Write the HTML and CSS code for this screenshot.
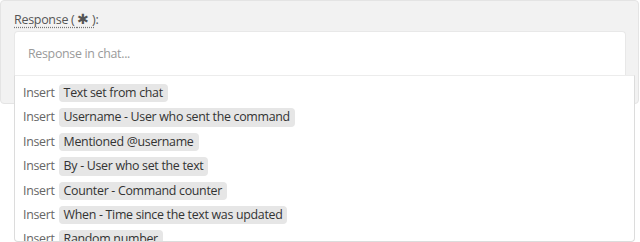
FILE: index.html
```html
<!DOCTYPE html>
<html>
<head>
<meta charset="utf-8">
<link rel="stylesheet" href="styles.css">
</head>
<body>
<div class="panel">
  <label class="label"><span class="abbr">Response ( <span class="star">✱</span> )</span>:</label>
  <div class="field">
    <div class="input">Response in chat...</div>
    <ul class="menu">
      <li class="item"><span class="verb">Insert</span><span class="pill">Text set from chat</span></li>
      <li class="item"><span class="verb">Insert</span><span class="pill">Username - User who sent the command</span></li>
      <li class="item"><span class="verb">Insert</span><span class="pill">Mentioned @username</span></li>
      <li class="item"><span class="verb">Insert</span><span class="pill">By - User who set the text</span></li>
      <li class="item"><span class="verb">Insert</span><span class="pill">Counter - Command counter</span></li>
      <li class="item"><span class="verb">Insert</span><span class="pill">When - Time since the text was updated</span></li>
      <li class="item"><span class="verb">Insert</span><span class="pill">Random number</span></li>
    </ul>
  </div>
</div>
</body>
</html>
```
FILE: styles.css
```css
html, body {
  margin: 0;
  padding: 0;
  background: #ffffff;
  font-family: "Open Sans", "Noto Sans", sans-serif;
  font-size: 12px;
  letter-spacing: -0.3px;
}

body {
  min-height: 242px;
}

.panel {
  width: 612px;
  height: 73px;
  padding: 9px 12px 20px 13px;
  background: #f2f2f2;
  border: 1px solid #e4e4e4;
  border-radius: 4px;
}

.label {
  display: inline-block;
  color: #555555;
  font-size: 12.5px;
  line-height: 18px;
  height: 21px;
}

.abbr {
  text-decoration: underline dotted #777;
  text-underline-offset: 3px;
}

.star {
  font-size: 14px;
}

.field {
  position: relative;
}

.input {
  height: 44px;
  line-height: 44px;
  padding-left: 13px;
  background: #ffffff;
  border: 1px solid #e8e8e8;
  border-bottom: none;
  border-radius: 4px 4px 0 0;
  color: #9a9a9a;
  font-size: 12.4px;
}

.menu {
  position: absolute;
  left: 0;
  top: 44px;
  width: 611px;
  height: 160px;
  margin: 0;
  padding: 5px 0 0 8px;
  list-style: none;
  background: #ffffff;
  border: 1px solid #dcdcdc;
  border-top-color: #ececec;
  border-radius: 0 0 4px 4px;
  overflow: hidden;
  box-sizing: content-box;
  z-index: 2;
}

.item {
  display: flex;
  align-items: center;
  gap: 4px;
  padding: 3px 0;
  line-height: 18.4px;
  font-size: 12.4px;
}

.verb {
  color: #666666;
}

.pill {
  padding: 0 5px;
  background: #e6e6e6;
  border-radius: 4px;
  color: #333333;
}
```
